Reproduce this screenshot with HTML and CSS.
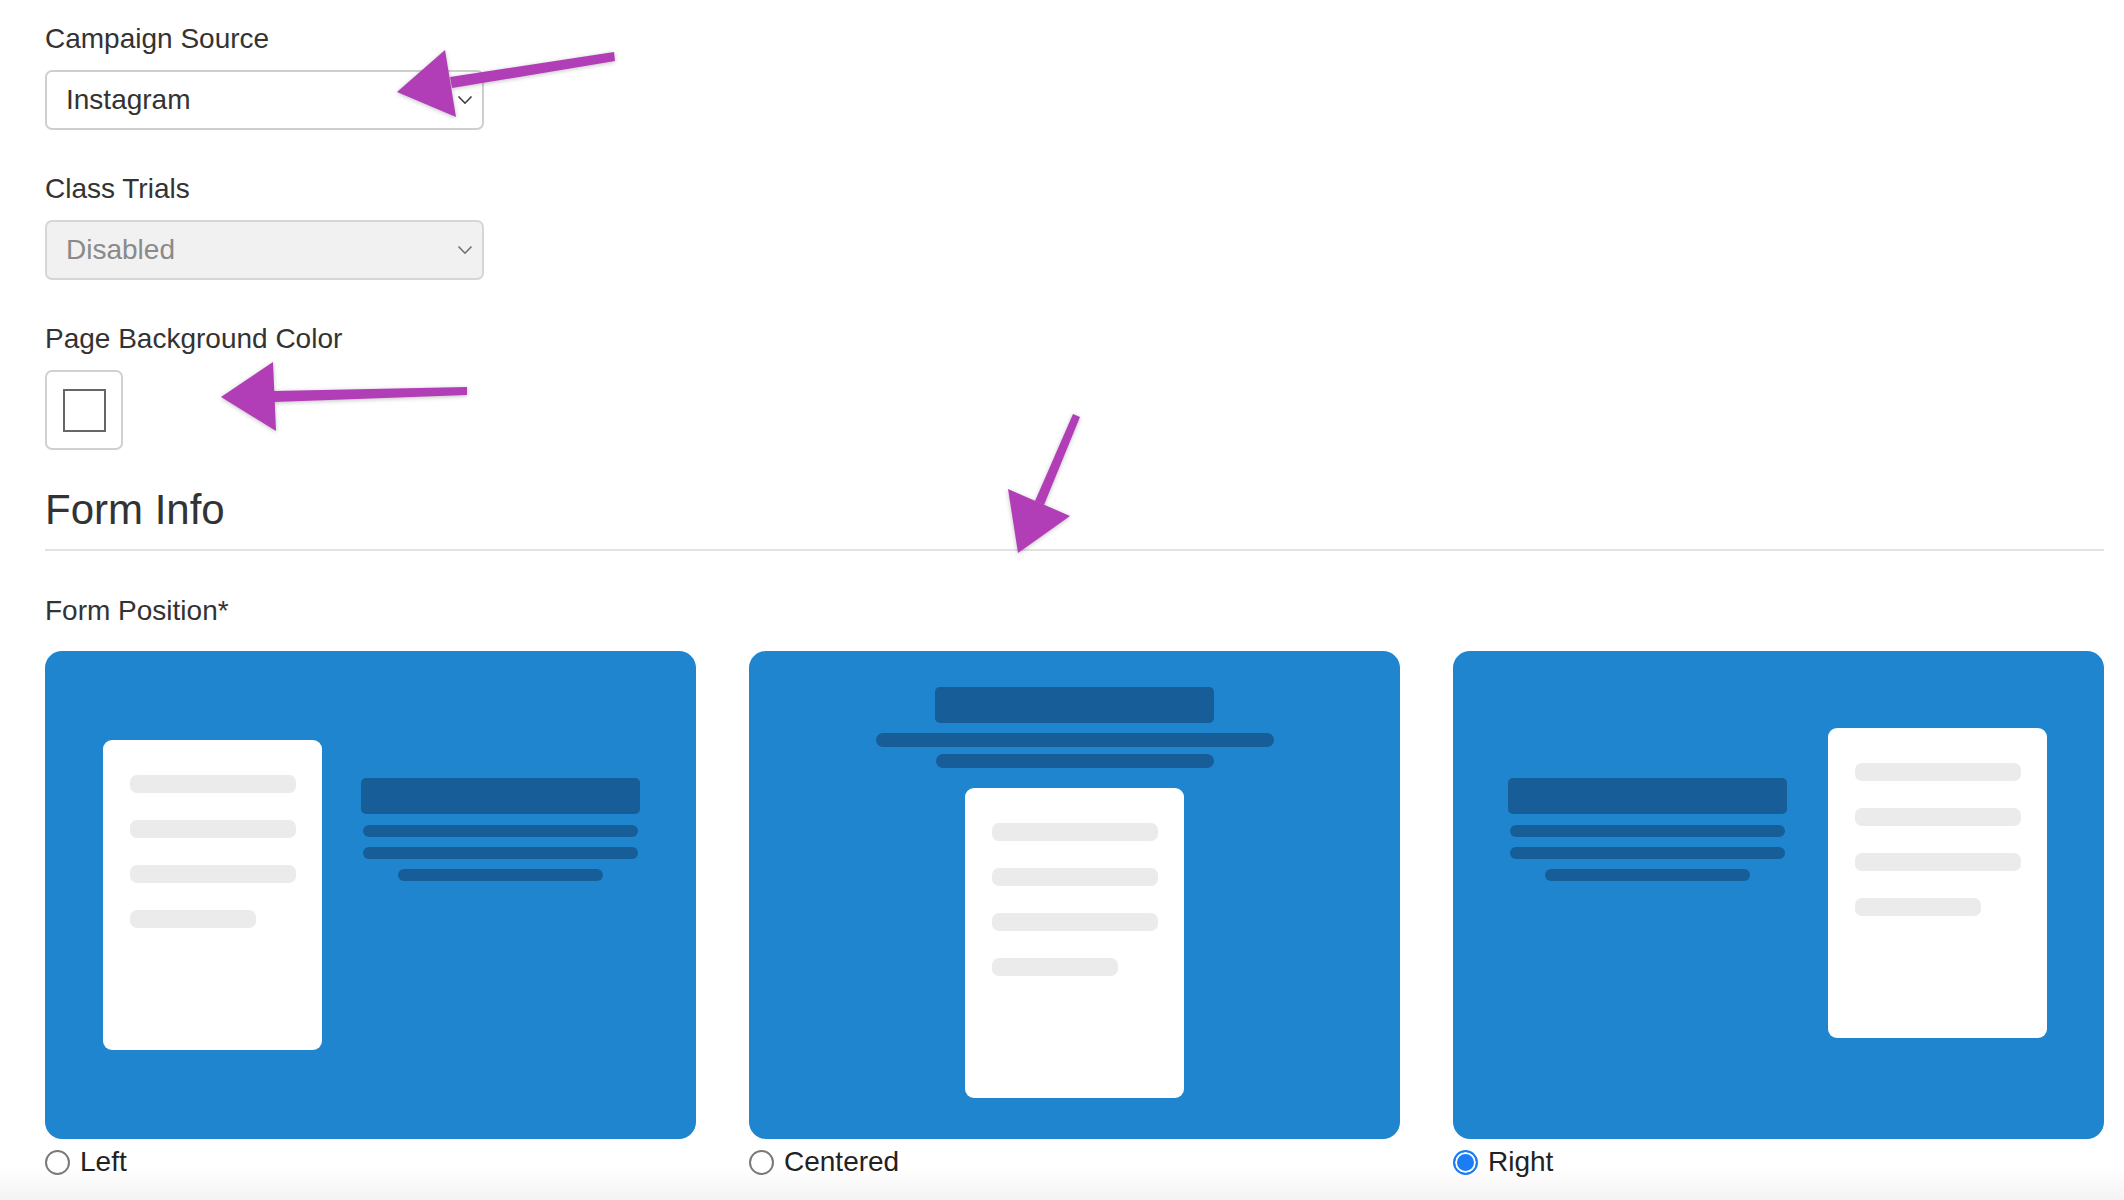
FILE: index.html
```html
<!DOCTYPE html>
<html lang="en">
<head>
<meta charset="utf-8">
<title>Form Settings</title>
<link rel="stylesheet" href="styles.css">
</head>
<body>
<div class="page">
  <div class="field">
    <div class="label">Campaign Source</div>
    <div class="select">
      <span class="select-value">Instagram</span>
      <svg class="chev" width="16" height="10" viewBox="0 0 16 10"><polyline points="1.5,1.5 8,8.2 14.5,1.5" fill="none" stroke="#3a3a3a" stroke-width="1.6"/></svg>
    </div>
  </div>
  <div class="field">
    <div class="label">Class Trials</div>
    <div class="select disabled">
      <span class="select-value">Disabled</span>
      <svg class="chev" width="16" height="10" viewBox="0 0 16 10"><polyline points="1.5,1.5 8,8.2 14.5,1.5" fill="none" stroke="#6f6f6f" stroke-width="1.6"/></svg>
    </div>
  </div>
  <div class="field field-color">
    <div class="label">Page Background Color</div>
    <div class="swatch"><span class="swatch-inner"></span></div>
  </div>
  <h2 class="section-title">Form Info</h2>
  <div class="label label-pos">Form Position*</div>
  <div class="cards">
    <div class="option">
      <div class="card card-left">
        <div class="panel">
          <span class="gbar"></span><span class="gbar"></span><span class="gbar"></span><span class="gbar short"></span>
        </div>
        <div class="text-block">
          <span class="dbar big"></span><span class="dbar thin"></span><span class="dbar thin"></span><span class="dbar thin narrow"></span>
        </div>
      </div>
      <label class="radio-row"><span class="radio"></span>Left</label>
    </div>
    <div class="option">
      <div class="card card-center">
        <span class="dbar big"></span>
        <span class="dbar thin2 wide"></span>
        <span class="dbar thin2 mid"></span>
        <div class="panel">
          <span class="gbar"></span><span class="gbar"></span><span class="gbar"></span><span class="gbar short"></span>
        </div>
      </div>
      <label class="radio-row"><span class="radio"></span>Centered</label>
    </div>
    <div class="option">
      <div class="card card-right">
        <div class="text-block">
          <span class="dbar big"></span><span class="dbar thin"></span><span class="dbar thin"></span><span class="dbar thin narrow"></span>
        </div>
        <div class="panel">
          <span class="gbar"></span><span class="gbar"></span><span class="gbar"></span><span class="gbar short"></span>
        </div>
      </div>
      <label class="radio-row"><span class="radio checked"></span>Right</label>
    </div>
  </div>
</div>
<svg class="annotations" width="2124" height="1200" viewBox="0 0 2124 1200">
  <g fill="#b13eb6">
    <polygon points="450,77 614,52 615,61 452,88"/>
    <polygon points="397,92 445,50 456,117"/>
    <polygon points="274,391 467,387 467,395 274,402"/>
    <polygon points="221,397 273,362 276,431"/>
    <polygon points="1073,414 1080,417 1044,505 1035,501"/>
    <polygon points="1018,553 1008,489 1070,516"/>
  </g>
</svg>
</body>
</html>
```
FILE: styles.css
```css
html, body {
  margin: 0;
  padding: 0;
  width: 2124px;
  height: 1200px;
  overflow: hidden;
}
body {
  font-family: "Liberation Sans", Arial, Helvetica, sans-serif;
  color: #333333;
  background: linear-gradient(to bottom, #ffffff 0, #ffffff 1168px, #f3f3f3 1200px);
  position: relative;
}
.page {
  padding: 19px 20px 0 45px;
}
.field {
  margin-bottom: 39px;
}
.field-color {
  margin-bottom: 35px;
}
.label {
  font-size: 28px;
  line-height: 40px;
  margin-bottom: 11px;
  color: #333;
}
.select {
  box-sizing: border-box;
  width: 439px;
  height: 60px;
  border: 2px solid #cfcfcf;
  border-radius: 7px;
  background: #fff;
  display: flex;
  align-items: center;
  justify-content: space-between;
  padding: 0 9px 0 19px;
  font-size: 28px;
  color: #333;
}
.select.disabled {
  background: #f1f1f1;
  border-color: #d6d6d6;
  color: #8a8a8a;
}
.chev {
  display: block;
}
.swatch {
  box-sizing: border-box;
  width: 78px;
  height: 80px;
  border: 2px solid #d0d0d0;
  border-radius: 7px;
  display: flex;
  align-items: center;
  justify-content: center;
  background: #fff;
}
.swatch-inner {
  box-sizing: border-box;
  width: 43px;
  height: 43px;
  border: 2px solid #666;
  background: #fff;
}
.section-title {
  margin: 0;
  font-size: 42px;
  font-weight: normal;
  line-height: 50px;
  padding-bottom: 14px;
  border-bottom: 2px solid #e2e2e2;
  color: #333;
}
.label-pos {
  margin-top: 40px;
  margin-bottom: 20px;
}
.cards {
  display: grid;
  grid-template-columns: 651px 651px 651px;
  column-gap: 53px;
}
.card {
  box-sizing: border-box;
  height: 488px;
  background: #1f85cf;
  border-radius: 17px;
  display: flex;
}
.panel {
  box-sizing: border-box;
  width: 219px;
  height: 310px;
  background: #fff;
  border-radius: 9px;
  padding: 35px 0 0 27px;
  display: flex;
  flex-direction: column;
  flex-shrink: 0;
}
.gbar {
  display: block;
  width: 166px;
  height: 18px;
  background: #ebebeb;
  border-radius: 7px;
  margin-bottom: 27px;
}
.gbar.short {
  width: 126px;
}
.text-block {
  width: 279px;
  display: flex;
  flex-direction: column;
  align-items: center;
  flex-shrink: 0;
  margin-top: 127px;
}
.dbar {
  display: block;
  background: #175d98;
}
.dbar.big {
  width: 279px;
  height: 36px;
  border-radius: 5px;
}
.dbar.thin {
  width: 275px;
  height: 12px;
  border-radius: 6px;
  margin-top: 11px;
}
.dbar.thin + .dbar.thin {
  margin-top: 10px;
}
.dbar.thin.narrow {
  width: 205px;
  margin-top: 11px;
}
.card-left {
  padding-left: 58px;
  align-items: flex-start;
  gap: 39px;
}
.card-left .panel {
  margin-top: 89px;
}
.card-right {
  padding-left: 55px;
  align-items: flex-start;
  gap: 41px;
}
.card-right .panel {
  margin-top: 77px;
}
.card-center {
  flex-direction: column;
  align-items: center;
  padding-top: 36px;
}
.dbar.thin2 {
  height: 14px;
  border-radius: 7px;
}
.dbar.thin2.wide {
  width: 398px;
  margin-top: 10px;
}
.dbar.thin2.mid {
  width: 278px;
  margin-top: 7px;
}
.card-center .panel {
  margin-top: 20px;
}
.radio-row {
  display: flex;
  align-items: center;
  gap: 10px;
  margin-top: 8px;
  font-size: 28px;
  line-height: 30px;
  color: #222;
}
.radio {
  box-sizing: border-box;
  width: 25px;
  height: 25px;
  border-radius: 50%;
  border: 2px solid #7a7a7a;
  background: #fff;
  flex-shrink: 0;
}
.radio.checked {
  border: 2px solid #1b7cf3;
  background: #1b7cf3;
  box-shadow: inset 0 0 0 2px #fff;
}
.annotations {
  position: absolute;
  left: 0;
  top: 0;
  pointer-events: none;
  filter: drop-shadow(0 1px 2px rgba(0, 0, 0, 0.25));
}
```
